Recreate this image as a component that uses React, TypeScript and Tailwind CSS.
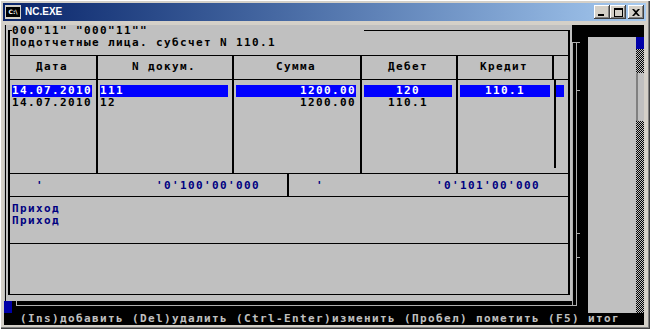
import React from "react";

const mono =
  "font-['DejaVu_Sans_Mono',monospace] font-bold text-[11px] leading-[12px] tracking-[1.378px] whitespace-pre";

function TitleButton({ children, className = "" }: { children: React.ReactNode; className?: string }) {
  return (
    <div
      className={
        "w-[16px] h-[14px] bg-[#d4d0c8] flex items-center justify-center shadow-[inset_-1px_-1px_#404040,inset_1px_1px_#ffffff,inset_-2px_-2px_#808080,inset_2px_2px_#d4d0c8] " +
        className
      }
    >
      {children}
    </div>
  );
}

function TitleBar() {
  return (
    <div className="mt-[3px] ml-[3px] mr-[4px] h-[18px] flex items-center bg-linear-to-r from-[#0a246a] to-[#a6caf0]">
      <div className="ml-[2px] w-[16px] h-[14px] bg-[#d4d0c8] flex items-center justify-center">
        <div className="w-[14px] h-[10px] bg-black flex items-center justify-center text-white font-['DejaVu_Sans',sans-serif] text-[6px] leading-[6px] font-bold">
          C:\
        </div>
      </div>
      <span className="ml-[4px] text-white font-['Liberation_Sans',sans-serif] font-bold text-[10px] leading-[12px]">
        NC.EXE
      </span>
      <div className="ml-auto mr-[2px] flex items-center">
        <TitleButton>
          <svg width="8" height="7" viewBox="0 0 8 7">
            <rect x="0" y="5" width="6" height="2" fill="#000" />
          </svg>
        </TitleButton>
        <TitleButton>
          <svg width="9" height="9" viewBox="0 0 9 9">
            <rect x="0.5" y="0.5" width="8" height="8" fill="none" stroke="#000" />
            <rect x="0" y="1" width="9" height="1" fill="#000" />
          </svg>
        </TitleButton>
        <TitleButton className="ml-[2px]">
          <svg width="8" height="7" viewBox="0 0 8 7">
            <path d="M0 0h2l2 2 2-2h2L5 3.5 8 7H6L4 5 2 7H0l3-3.5z" fill="#000" />
          </svg>
        </TitleButton>
      </div>
    </div>
  );
}

const cols = "grid grid-cols-[88px_136px_128px_96px_96px_14px]";

function Dialog() {
  return (
    <div className="h-[276px] bg-[#c0c0c0] flex">
      <div className="w-[1px]" />
      <div className="w-[1px] bg-black" />
      <div className="w-[2px]" />
      <div className={"mt-[5px] w-[562px] h-[265px] border-x-2 border-y border-black flex flex-col text-black " + mono}>
        <div className="-mt-[6px] ml-[2px] w-[352px] h-[12px] bg-[#c0c0c0]">000"11" "000"11""</div>
        <div className="ml-[2px] h-[12px]">Подотчетные лица. субсчет N 110.1</div>
        <div className="mt-[6px] border-t border-black flex flex-col">
          <div className={cols + " h-[23px]"}>
            {["Дата", "N докум.", "Сумма", "Дебет", "Кредит"].map((h) => (
              <div key={h} className="border-r-2 border-black pt-[5px] pl-[2px] pr-[4px] text-center">
                {h}
              </div>
            ))}
            <div />
          </div>
          <div className={cols + " h-[94px] border-t border-black"}>
            <div className="border-r-2 border-black pt-[5px] pl-[2px] pr-[4px] flex flex-col">
              <div className="h-[12px] bg-[#0000ff] text-white">14.07.2010</div>
              <div className="h-[12px]">14.07.2010</div>
            </div>
            <div className="border-r-2 border-black pt-[5px] pl-[2px] pr-[4px] flex flex-col">
              <div className="h-[12px] bg-[#0000ff] text-white">111</div>
              <div className="h-[12px]">12</div>
            </div>
            <div className="border-r-2 border-black pt-[5px] pl-[2px] pr-[4px] flex flex-col text-right">
              <div className="h-[12px] bg-[#0000ff] text-white">1200.00</div>
              <div className="h-[12px]">1200.00</div>
            </div>
            <div className="border-r-2 border-black pt-[5px] pl-[2px] pr-[4px] flex flex-col text-center">
              <div className="h-[12px] bg-[#0000ff] text-white">120</div>
              <div className="h-[12px]">110.1</div>
            </div>
            <div className="pt-[5px] pl-[2px] pr-[4px] flex flex-col text-center">
              <div className="h-[12px] bg-[#0000ff] text-white">110.1</div>
              <div className="h-[12px]" />
            </div>
            <div className="self-start h-[88px] border-l-2 border-black pt-[5px] pr-[4px] flex flex-col">
              <div className="h-[12px] bg-[#0000ff]" />
            </div>
          </div>
          <div className="grid grid-cols-[279px_1fr] h-[23px] border-t border-black text-[#000080]">
            <div className="border-r-2 border-black pt-[6px] pl-[2px]">{"   '              '0'100'00'000"}</div>
            <div className="pt-[6px] pl-[3px]">{"   '              '0'101'00'000"}</div>
          </div>
          <div className="h-[47px] border-t border-black pt-[6px] pl-[2px] text-[#000080] flex flex-col">
            <div className="h-[12px]">Приход</div>
            <div className="h-[12px]">Приход</div>
          </div>
          <div className="h-[48px] border-t border-black" />
        </div>
      </div>
    </div>
  );
}

function BackFrame() {
  return (
    <svg width="16" height="288" viewBox="0 0 16 288" className="block">
      <rect x="0" y="17" width="1" height="264" fill="#b0b0b0" />
      <rect x="4" y="17" width="1" height="264" fill="#b0b0b0" />
      <rect x="0" y="17" width="8" height="1" fill="#b0b0b0" />
      <rect x="5" y="65" width="3" height="1" fill="#b0b0b0" />
      <rect x="5" y="208" width="3" height="1" fill="#b0b0b0" />
      <rect x="5" y="232" width="3" height="1" fill="#b0b0b0" />
      <rect x="0" y="280" width="5" height="1" fill="#b0b0b0" />
    </svg>
  );
}

function Checker({ className = "" }: { className?: string }) {
  return (
    <svg className={"block " + className} width="8" height="100%">
      <defs>
        <pattern id="chk" width="2" height="2" patternUnits="userSpaceOnUse">
          <rect width="2" height="2" fill="#c0c0c0" />
          <rect width="1" height="1" fill="#000" />
          <rect x="1" y="1" width="1" height="1" fill="#000" />
        </pattern>
      </defs>
      <rect width="100%" height="100%" fill="url(#chk)" />
    </svg>
  );
}

function Console() {
  return (
    <div className="ml-[4px] mt-[4px] w-[640px] h-[300px] bg-black flex flex-col">
      <div className="flex h-[288px]">
        <div className="w-[568px] flex flex-col">
          <Dialog />
          <div className="h-[12px] flex">
            <div className="w-[8px] h-[12px] bg-[#0000a8]" />
            <div className="w-[4px]" />
            <div className="flex-1 h-[5px] border-l border-b border-[#b0b0b0]" />
          </div>
        </div>
        <BackFrame />
        <div className="w-[48px] flex flex-col">
          <div className="h-[12px]" />
          <div className="flex-1 bg-[#c0c0c0]" />
        </div>
        <div className="w-[8px] flex flex-col">
          <div className="h-[12px]" />
          <div className="h-[12px] bg-[#0000a8]" />
          <Checker className="h-[24px]" />
          <div className="h-[48px] bg-[#c0c0c0] border-l-2 border-[#808080]" />
          <Checker className="flex-1" />
        </div>
      </div>
      <div className={"h-[12px] pl-[16px] text-[#c0c0c0] " + mono}>
        (Ins)добавить (Del)удалить (Ctrl-Enter)изменить (Пробел) пометить (F5) итог
      </div>
    </div>
  );
}

export default function App() {
  return (
    <div className="w-[650px] h-[329px] bg-[#d4d0c8] flex flex-col overflow-hidden shadow-[inset_1px_1px_#ffffff,inset_-1px_-1px_#404040,inset_-2px_-2px_#808080]">
      <TitleBar />
      <Console />
    </div>
  );
}
